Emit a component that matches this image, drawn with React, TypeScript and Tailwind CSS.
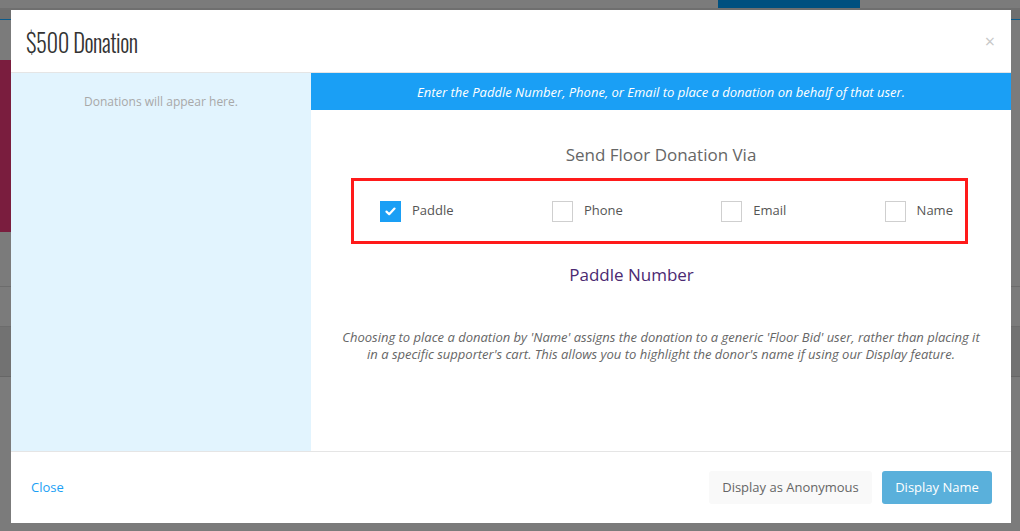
const options = [
  { label: "Paddle", checked: true },
  { label: "Phone", checked: false },
  { label: "Email", checked: false },
  { label: "Name", checked: false },
];

const Checkbox = ({ checked }: { checked: boolean }) =>
  checked ? (
    <span className="w-[21px] h-[21px] bg-[#1a9ff5] flex items-center justify-center">
      <svg width="11" height="9" viewBox="0 0 11 9" fill="none">
        <path d="M1.5 4.6 L4.2 7.2 L9.5 1.6" stroke="white" strokeWidth="2.2" strokeLinecap="round" strokeLinejoin="round" />
      </svg>
    </span>
  ) : (
    <span className="w-[21px] h-[21px] border border-[#cfcfcf] bg-white" />
  );

const Backdrop = () => (
  <div className="h-[531px] w-full bg-[#7b7b7b] flex flex-col">
    <div className="h-[8px] flex">
      <div className="ml-[718px] w-[142px] bg-[#00507f]" />
    </div>
    <div className="h-[12px] bg-[#6f6f6f] border-b border-[#0a5a8a]" />
    <div className="h-[40px]" />
    <div className="h-[172px] w-[11px] bg-[#7a1d3e]" />
    <div className="h-[55px] border-b border-[#6c6c6c]" />
    <div className="h-[40px] border-b border-[#6c6c6c]" />
    <div className="h-[50px] bg-[#727272] border-b border-[#666]" />
  </div>
);

export default function App() {
  return (
    <div className="relative w-[1020px] h-[531px] overflow-hidden font-['Open_Sans',sans-serif]">
      <Backdrop />
      <div className="absolute left-[11px] top-[10px] w-[1000px] h-[513px] bg-white flex flex-col">
        <div className="h-[63px] flex items-center justify-between pl-[15px] pr-[16px] border-b border-[#e5e5e5]">
          <h1 className="text-[26px] font-light text-[#333] tracking-[-0.5px] font-['Oswald','DejaVu_Sans_Condensed','Liberation_Sans_Narrow',sans-serif] scale-x-[0.87] origin-left">
            $500 Donation
          </h1>
          <span className="text-[#c8c8c8] text-[18px] leading-none">×</span>
        </div>
        <div className="flex h-[378px]">
          <div className="w-[300px] bg-[#e2f4fe] pt-[20px] text-center text-[12px] text-[#a8a8a8]">
            Donations will appear here.
          </div>
          <div className="flex-1 flex flex-col">
            <div className="h-[37px] bg-[#1a9ff5] flex items-center justify-center text-white italic text-[13px] font-medium pt-[2px]">
              Enter the Paddle Number, Phone, or Email to place a donation on behalf of that user.
            </div>
            <div className="mt-[33px] text-center text-[17px] leading-[24px] text-[#666]">Send Floor Donation Via</div>
            <div className="mt-[11px] ml-[40px] w-[617px] h-[66px] border-[3px] border-[#ff1a1a] flex items-center justify-between pl-[26px] pr-[12px]">
              {options.map((o) => (
                <label key={o.label} className="flex items-center gap-[11px] text-[13px] text-[#555]">
                  <Checkbox checked={o.checked} />
                  {o.label}
                </label>
              ))}
            </div>
            <div className="mt-[19px] text-center text-[17px] leading-[24px] text-[#4b2a72] pr-[59px]">Paddle Number</div>
            <p className="mt-[42px] px-[30px] text-center italic text-[13px] leading-[17px] text-[#666]">
              Choosing to place a donation by 'Name' assigns the donation to a generic 'Floor Bid' user, rather than placing it
              in a specific supporter's cart. This allows you to highlight the donor's name if using our Display feature.
            </p>
          </div>
        </div>
        <div className="flex-1 border-t border-[#e5e5e5] flex items-center justify-between pl-[20px] pr-[19px]">
          <span className="text-[13px] text-[#1a9ff5]">Close</span>
          <div className="flex gap-[10px]">
            <button className="h-[33px] w-[163px] rounded-[3px] bg-[#f9f9f9] text-[13px] text-[#666]">Display as Anonymous</button>
            <button className="h-[33px] w-[110px] rounded-[3px] bg-[#5ab0db] text-[13px] text-white">Display Name</button>
          </div>
        </div>
      </div>
    </div>
  );
}
